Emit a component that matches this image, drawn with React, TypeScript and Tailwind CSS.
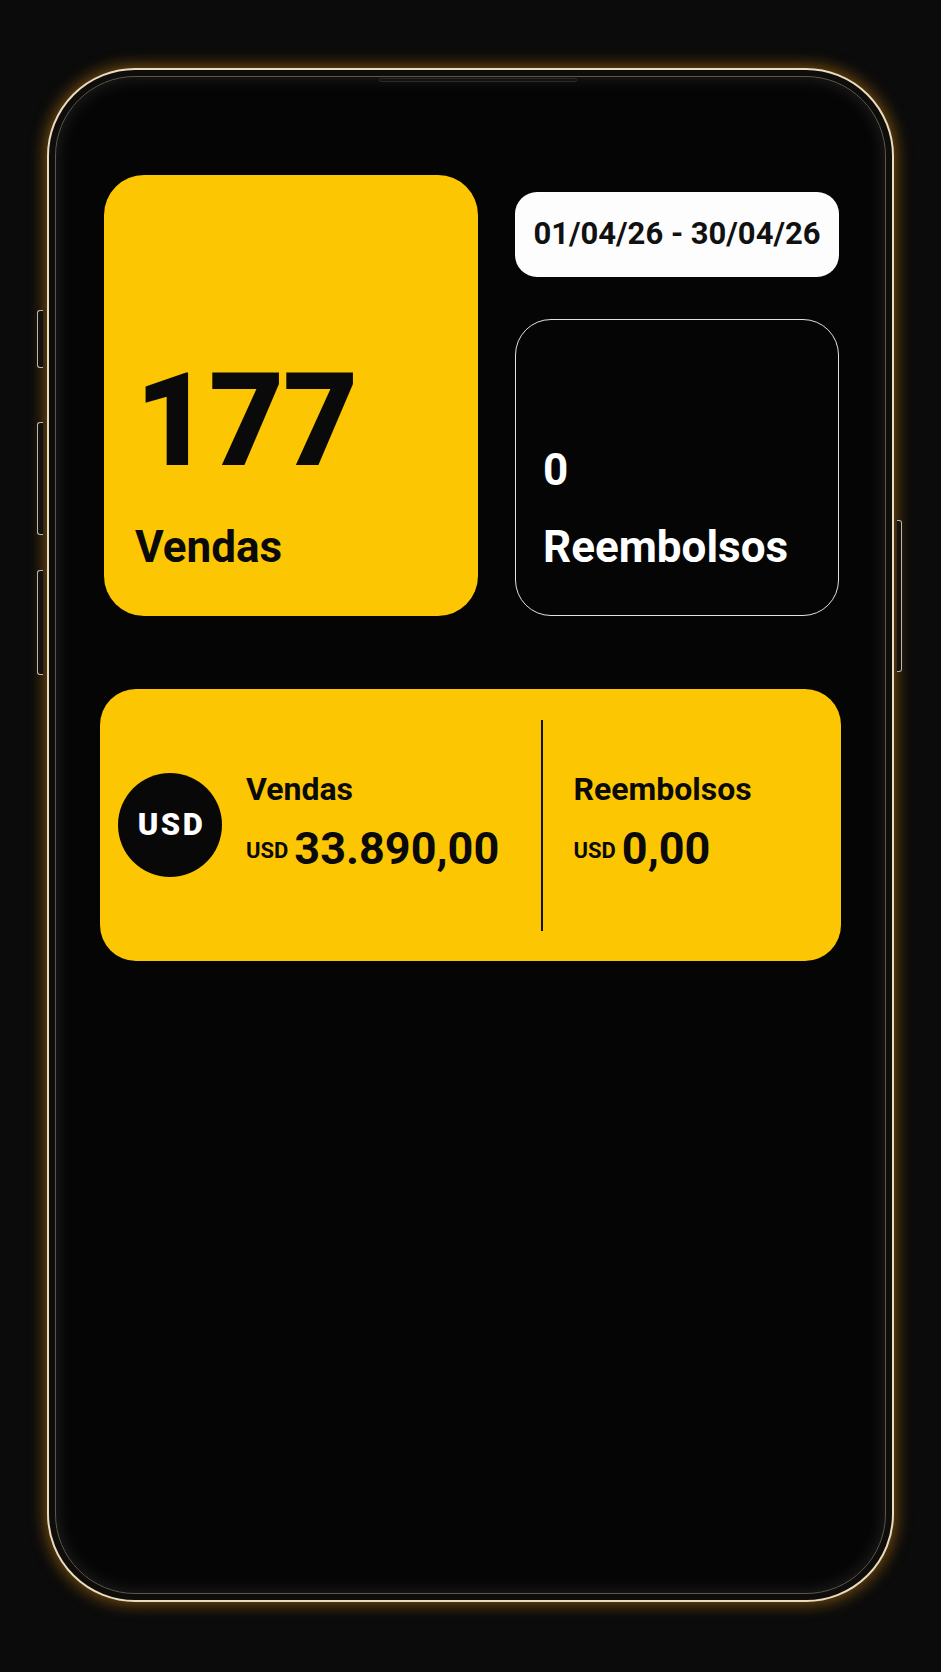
const YELLOW = "bg-[#FCC602]";

function SideButtons() {
  return (
    <>
      <div className="absolute left-[-12px] top-[240px] h-[58px] w-[6px] rounded-l-[3px] border border-r-0 border-[#bdb6aa] bg-[#141210]" />
      <div className="absolute left-[-12px] top-[352px] h-[113px] w-[6px] rounded-l-[3px] border border-r-0 border-[#bdb6aa] bg-[#141210]" />
      <div className="absolute left-[-12px] top-[500px] h-[105px] w-[6px] rounded-l-[3px] border border-r-0 border-[#bdb6aa] bg-[#141210]" />
      <div className="absolute right-[-10px] top-[450px] h-[152px] w-[5px] rounded-r-[3px] border border-l-0 border-[#bdb6aa] bg-[#141210]" />
      <div className="absolute left-[330px] top-[8px] h-[4px] w-[198px] rounded-full border border-[#2c2a27] bg-[#121212]" />
    </>
  );
}

function StatCards() {
  return (
    <div className="flex gap-[37px] pl-[4px]">
      <div
        className={`flex h-[441px] w-[374px] flex-col justify-end rounded-[40px] ${YELLOW} pb-[47px] pl-[31px] text-[#0a0a0a]`}
      >
        <div className="text-[130px] font-black leading-none tracking-[-0.01em]">177</div>
        <div className="mt-[39px] text-[44px] font-bold leading-none">Vendas</div>
      </div>

      <div className="mt-[17px] flex w-[324px] flex-col gap-[42px]">
        <div className="flex h-[85px] items-center justify-center rounded-[22px] bg-[#fdfdfd] text-[31px] font-bold text-[#111]">
          01/04/26 - 30/04/26
        </div>
        <div className="flex h-[297px] flex-col justify-end rounded-[36px] border-[1.5px] border-[#e2e2e2] pb-[46px] pl-[27px] text-white">
          <div className="text-[44px] font-bold leading-none">0</div>
          <div className="mt-[33px] text-[44px] font-bold leading-none">Reembolsos</div>
        </div>
      </div>
    </div>
  );
}

function Amount({ label, value }: { label: string; value: string }) {
  return (
    <div className="pb-[7px] text-[#0a0a0a]">
      <div className="text-[32px] font-bold leading-none">{label}</div>
      <div className="mt-[21px] flex items-end gap-[6px]">
        <span className="mb-[9px] text-[22px] font-bold leading-none">USD</span>
        <span className="text-[45px] font-bold leading-none">{value}</span>
      </div>
    </div>
  );
}

function Totals() {
  return (
    <div className={`mt-[73px] flex h-[272px] items-center rounded-[36px] ${YELLOW} pl-[18px]`}>
      <div className="flex w-[423px] items-center gap-[24px]">
        <div className="flex h-[104px] w-[104px] shrink-0 items-center justify-center rounded-full bg-[#080808] pl-[3px] text-[31px] font-black tracking-[0.08em] text-white">
          USD
        </div>
        <Amount label="Vendas" value="33.890,00" />
      </div>
      <div className="h-[211px] w-[1.5px] bg-[#111]" />
      <div className="pl-[31px]">
        <Amount label="Reembolsos" value="0,00" />
      </div>
    </div>
  );
}

export default function App() {
  return (
    <div className="min-h-[1672px] w-full bg-[#0b0b0b] pl-[47px] pt-[68px] font-['Roboto',sans-serif]">
      <div className="relative h-[1534px] w-[847px] rounded-[88px] border-[2.5px] border-[#e8dcc2] bg-[#0f0d0a] p-[6px] shadow-[0_0_16px_2px_rgba(235,150,20,0.5)]">
        <SideButtons />
        <div className="h-full w-full rounded-[80px] border-[1.5px] border-[#5d564c] bg-[#050505] px-[44px] pt-[98px] shadow-[inset_0_0_18px_rgba(255,255,255,0.12)]">
          <StatCards />
          <Totals />
        </div>
      </div>
    </div>
  );
}
